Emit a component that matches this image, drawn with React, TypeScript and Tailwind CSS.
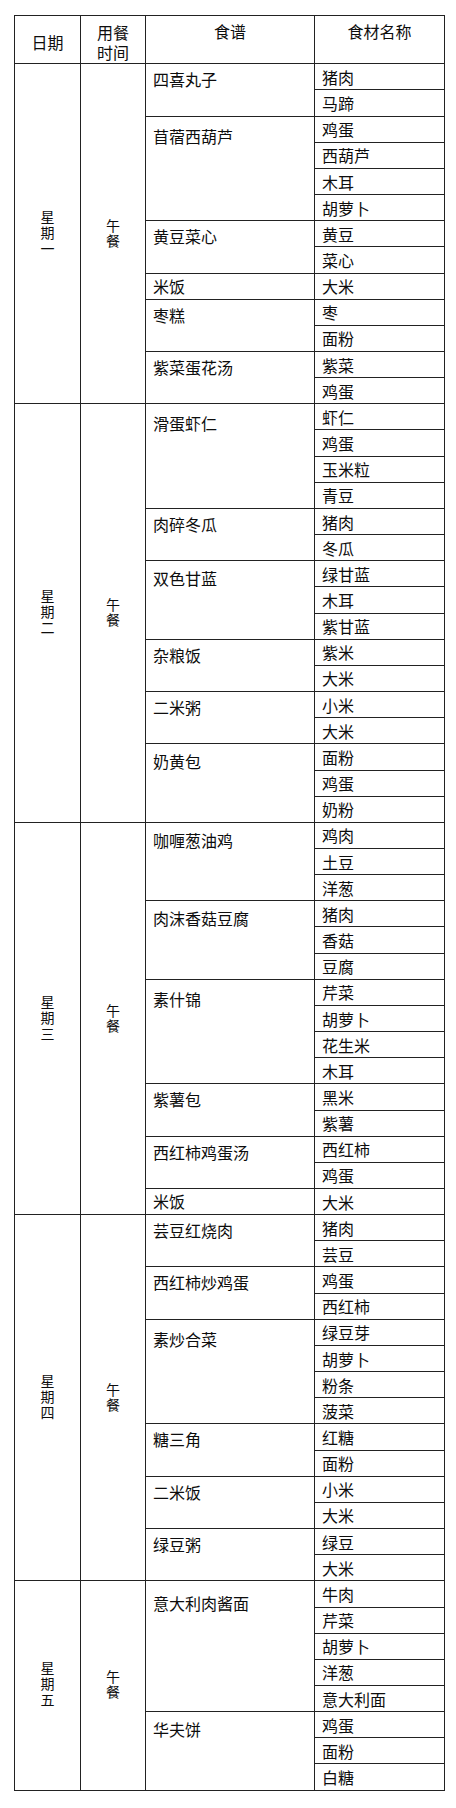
import React from "react";

type Dish = { name: string; items: string[] };
type Day = { label: string; dishes: Dish[] };

const days: Day[] = [
  {
    label: "星期一",
    dishes: [
      { name: "四喜丸子", items: ["猪肉", "马蹄"] },
      { name: "苜蓿西葫芦", items: ["鸡蛋", "西葫芦", "木耳", "胡萝卜"] },
      { name: "黄豆菜心", items: ["黄豆", "菜心"] },
      { name: "米饭", items: ["大米"] },
      { name: "枣糕", items: ["枣", "面粉"] },
      { name: "紫菜蛋花汤", items: ["紫菜", "鸡蛋"] },
    ],
  },
  {
    label: "星期二",
    dishes: [
      { name: "滑蛋虾仁", items: ["虾仁", "鸡蛋", "玉米粒", "青豆"] },
      { name: "肉碎冬瓜", items: ["猪肉", "冬瓜"] },
      { name: "双色甘蓝", items: ["绿甘蓝", "木耳", "紫甘蓝"] },
      { name: "杂粮饭", items: ["紫米", "大米"] },
      { name: "二米粥", items: ["小米", "大米"] },
      { name: "奶黄包", items: ["面粉", "鸡蛋", "奶粉"] },
    ],
  },
  {
    label: "星期三",
    dishes: [
      { name: "咖喱葱油鸡", items: ["鸡肉", "土豆", "洋葱"] },
      { name: "肉沫香菇豆腐", items: ["猪肉", "香菇", "豆腐"] },
      { name: "素什锦", items: ["芹菜", "胡萝卜", "花生米", "木耳"] },
      { name: "紫薯包", items: ["黑米", "紫薯"] },
      { name: "西红柿鸡蛋汤", items: ["西红柿", "鸡蛋"] },
      { name: "米饭", items: ["大米"] },
    ],
  },
  {
    label: "星期四",
    dishes: [
      { name: "芸豆红烧肉", items: ["猪肉", "芸豆"] },
      { name: "西红柿炒鸡蛋", items: ["鸡蛋", "西红柿"] },
      { name: "素炒合菜", items: ["绿豆芽", "胡萝卜", "粉条", "菠菜"] },
      { name: "糖三角", items: ["红糖", "面粉"] },
      { name: "二米饭", items: ["小米", "大米"] },
      { name: "绿豆粥", items: ["绿豆", "大米"] },
    ],
  },
  {
    label: "星期五",
    dishes: [
      { name: "意大利肉酱面", items: ["牛肉", "芹菜", "胡萝卜", "洋葱", "意大利面"] },
      { name: "华夫饼", items: ["鸡蛋", "面粉", "白糖"] },
    ],
  },
];

const namePad: Record<number, string> = {
  1: "pt-[2px]",
  2: "pt-[5px]",
  3: "pt-[7px]",
  4: "pt-[9px]",
  5: "pt-[12px]",
};

export default function App() {
  return (
    <div
      className="min-h-[1808px] bg-white pt-[15px] pl-[14px] text-[#0d0d0d]"
      style={{ fontFamily: '"Noto Sans CJK SC", "Noto Sans", sans-serif' }}
    >
      <div className="flex w-[431px] flex-col gap-px bg-[#222222] p-px">
        {/* header */}
        <div className="flex h-[47.3px] gap-px text-[16px] leading-[20px]">
          <div className="flex w-[65px] items-center justify-center bg-white pt-[4px]">日期</div>
          <div className="flex w-[64px] items-center justify-center bg-white pt-[4px]">
            <div className="w-[32px] text-center">用餐时间</div>
          </div>
          <div className="w-[168px] bg-white pt-[5px] text-center">食谱</div>
          <div className="flex-1 bg-white pt-[5px] text-center">食材名称</div>
        </div>
        {days.map((day) => (
          <div key={day.label} className="flex gap-px">
            <div className="flex w-[65px] items-center justify-center bg-white">
              <div className="text-[14px] leading-[16px] tracking-[2px] [text-orientation:upright] [writing-mode:vertical-rl]">
                {day.label}
              </div>
            </div>
            <div className="flex w-[64px] items-center justify-center bg-white">
              <div className="text-[14px] leading-[16px] tracking-[1px] [text-orientation:upright] [writing-mode:vertical-rl]">
                午餐
              </div>
            </div>
            <div className="flex flex-1 flex-col gap-px">
              {day.dishes.map((dish, di) => (
                <div key={di} className="flex gap-px">
                  <div
                    className={`w-[168px] bg-white pl-[7px] text-[16px] leading-[20px] ${namePad[dish.items.length]}`}
                  >
                    {dish.name}
                  </div>
                  <div className="flex flex-1 flex-col gap-px">
                    {dish.items.map((it, ii) => (
                      <div
                        key={ii}
                        className="flex h-[25.17px] items-center bg-white pl-[7px] text-[16px] leading-[20px]"
                      >
                        {it}
                      </div>
                    ))}
                  </div>
                </div>
              ))}
            </div>
          </div>
        ))}
      </div>
    </div>
  );
}
